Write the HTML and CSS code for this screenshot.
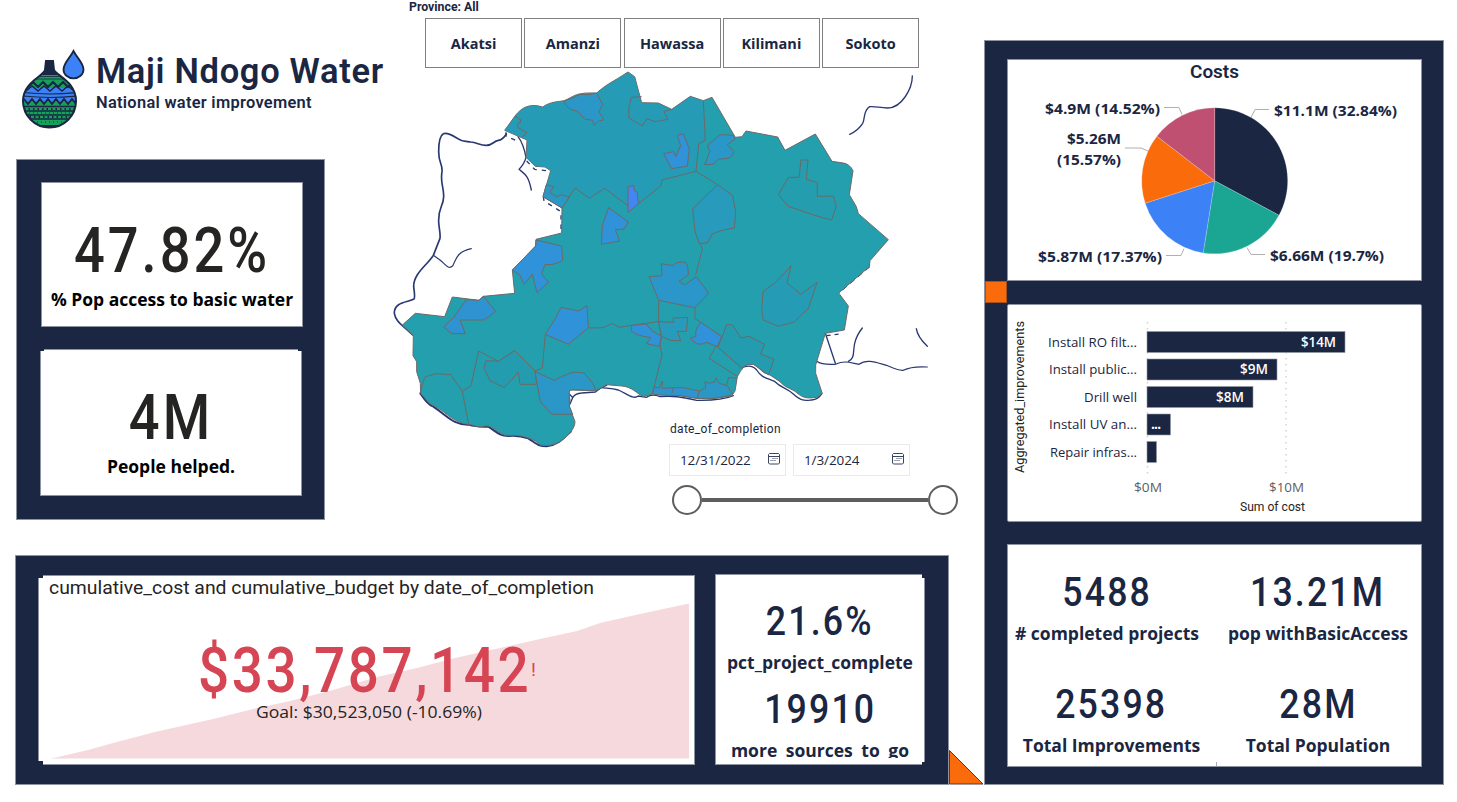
FILE: index.html
```html
<!DOCTYPE html>
<html lang="en">
<head>
<meta charset="utf-8">
<title>Maji Ndogo Water</title>
<link rel="stylesheet" href="styles.css">
</head>
<body>
<main class="page">
  <div class="left">
    <div class="upper">
      <div class="brand-col">
        <header class="brand">
          <svg class="logo" viewBox="0 0 66 82" width="66" height="82">
            <defs><clipPath id="pot"><path d="M26 12h7l1 9c3 6 22 12 22 31a26.500 26.500 0 0 1-53 0C3 33 24 27 25 21z"/></clipPath></defs>
            <g clip-path="url(#pot)">
              <rect width="66" height="82" fill="#1a2642"/>
              <rect y="25.500" width="66" height="14" fill="#16a05c"/>
              <rect y="39" width="66" height="13" fill="#3b82f6"/>
              <rect y="52" width="66" height="24" fill="#16a05c"/>
              <g fill="none" stroke="#1a2642">
                <path d="M0 27.500h60M0 30h60" stroke-width=".8"/>
                <path d="M8 38l5-5 5 5 5-5 5 5 5-5 5 5 5-5 5 5 5-5" stroke-width="2"/>
                <path d="M6 42l6-5 6 5 6-5 6 5 6-5 6 5 6-5 6 5" stroke-width="1.500"/>
                <path d="M3 43.500q27 3 54 0M3 47q27 3 54 0" stroke-width="1.200"/>
                <path d="M4 50l4 5 4-5 4 5 4-5 4 5 4-5 4 5 4-5 4 5 4-5 4 5 4-5 4 5" stroke-width="1.800"/>
                <path d="M2 57.500h56M3 62h54M5 66h50M8 70h44" stroke-width="1.300"/>
                <path d="M4 60h54M5 68h50" stroke-dasharray="1.500 3" stroke-width="2"/>
                <path d="M5 64h54M9 73h44" stroke-dasharray="1 3" stroke-width="1.200"/>
              </g>
            </g>
            <path d="M26 12h7l1 9c3 6 22 12 22 31a26.500 26.500 0 0 1-53 0C3 33 24 27 25 21z" fill="none" stroke="#1a2642" stroke-width="2"/>
            <path d="M26 12h7l1 9 5 5H20l5-5z" fill="#1a2642"/>
            <path d="M53.500 2C57 9 63.500 14 63.500 20.500a10 8.800 0 0 1-20 0C43.500 14 50 9 53.500 2z" fill="#3b82f6" stroke="#1a2642" stroke-width="1.800"/>
          </svg>
          <div class="brand-text">
            <h1 class="brand-name">Maji Ndogo Water</h1>
            <p class="brand-sub">National water improvement</p>
          </div>
        </header>
        <section class="panel kpi-panel">
          <div class="card kpi"><div class="num num-xl"><span>47.82%</span></div><div class="cap">% Pop access to basic water</div></div>
          <div class="card kpi kpi-low"><div class="num num-xl"><span>4M</span></div><div class="cap">People helped.</div></div>
        </section>
      </div>

      <div class="map-col">
        <div class="province">Province: All</div>
        <nav class="tabs">
          <button class="tab">Akatsi</button><button class="tab">Amanzi</button><button class="tab">Hawassa</button><button class="tab">Kilimani</button><button class="tab">Sokoto</button>
        </nav>
        <div class="map-area">
          <svg class="map" viewBox="1170 204 1782 1146" width="594" height="382">
            <g fill="none" stroke="#2a3872" stroke-width="5" stroke-linecap="round" stroke-linejoin="round">
              <g transform="translate(1140 180)">
                <path d="M379 222Q368 240 355 241C340 243 338 257 318 256C300 256 290 247 272 246C258 244 247 246 232 235C220 228 203 216 190 221C181 226 176 250 176 275C176 310 188 310 186 335C180 370 192 380 191 410C190 440 176 440 176 480C175 500 182 515 180 535L160 586C145 612 100 640 101 680C103 697 106 712 102 717C85 727 42 725 43 760C47 783 60 790 98 825"/>
                <path d="M160 586L180 600C195 612 205 630 218 618C228 600 228 576 274 566" stroke-width="3.500"/>
                <path d="M414 230Q430 250 438 292Q434 310 417 328C435 343 445 345 454 390" stroke-width="4"/>
                <path d="M378 217V228L412 243M440 303L464 328L506 333M490 410L492 423L543 455V515" stroke-dasharray="13 15" stroke-width="4" stroke-linecap="butt"/>
              </g>
              <g transform="translate(1920 180)">
                <path d="M817 48C817 85 785 145 742 144C720 144 705 138 689 140C669 152 676 175 668 190Q655 211 629 223" stroke-width="4"/>
              </g>
              <g transform="translate(1920 720)">
                <path d="M556 280L586 370M625 364C646 355 638 335 644 310Q650 285 667 264M829 266Q832 290 862 319" stroke-width="4"/>
                <path d="M530 364Q545 375 586 373C615 360 630 368 657 373C680 355 710 368 740 376C760 385 775 393 790 391Q815 378 862 381" stroke-width="3.500"/>
                <path d="M560 287L600 282" stroke-dasharray="12 12" stroke-linecap="butt" stroke-width="4"/>
                <path d="M690 80L596 160" stroke-dasharray="18 12" stroke-width="3" stroke-linecap="butt"/>
                <path d="M303 384C325 374 340 378 350 390C365 415 385 415 405 425C425 445 440 443 460 462C485 485 495 482 515 480Q535 478 546 460M280 467C255 478 220 482 170 481C120 470 100 467 60 470Q35 460 20 472L-5 468C-20 480-40 460-65 450C-90 442-110 447-130 440" stroke-width="4"/>
              </g>
              <g transform="translate(1140 720)">
                <path d="M121 460C135 480 145 495 160 500C205 530 220 555 266 554C290 562 310 560 325 560C350 575 355 587 385 588C410 585 430 590 445 595C475 615 475 619 500 619C535 615 550 595 572 575" stroke-width="6"/>
                <path d="M568 462L578 473Q585 460 605 459L646 456Q665 440 680 436M578 473L570 492" stroke-width="4"/>
              </g>
            </g>
            <path fill="#239fae" stroke="#6c6a68" stroke-width="3" stroke-linejoin="round" d="M1884 216L1904 230 1925 308 1975 309 2015 328 2071 289 2110 302 2136 292 2206 412 2226 410 2238 393 2333 411 2355 451 2446 402 2496 484 2530 489Q2549 492 2559 512L2548 584 2569 620 2575 641 2665 719 2610 782 2608 800 2516 879 2545 918 2533 990 2476 1000 2447 1095V1120L2466 1178Q2459 1193 2440 1193C2410 1197 2400 1186 2385 1174C2365 1162 2355 1162 2340 1145L2310 1125 2292 1118C2275 1105 2267 1090 2250 1092Q2231 1092 2212 1130L2205 1173 2195 1188 2140 1196H2095L2040 1187 1980 1185 1957 1182 1930 1190C1910 1180 1895 1160 1865 1158L1820 1154 1788 1172 1715 1170Q1704 1173 1707 1183L1710 1200 1708 1220 1725 1265Q1725 1283 1705 1304C1675 1334 1650 1340 1620 1335L1605 1322C1560 1302 1550 1307 1515 1306C1485 1295 1480 1275 1455 1278C1430 1285 1425 1275 1406 1273C1365 1270 1340 1240 1315 1225L1288 1210 1262 1180 1261 1150 1250 1115V1085L1239 1067 1240 1007 1207 975 1246 940 1334 950 1357 891 1437 901 1450 889 1544 880 1537 810 1607 738 1608 718 1685 699 1686 624 1629 590 1652 512 1635 501 1606 499 1578 472 1581 420 1514 391 1545 348C1565 322 1590 309 1628 321 1650 305 1675 305 1693 302 1725 288 1725 277 1790 279 1820 252 1835 248 1884 216Z"/>
            <path fill="#259bb5" d="M1884 218L1903 231 1924 310 1975 311 2015 330 2071 291 2109 303 2117 421 2096 432 2088 514 1986 540 1982 558 1884 636 1884 617 1814 565 1768 595 1725 564 1686 622 1631 590 1654 512 1635 500 1606 498 1580 472 1583 420 1516 391 1547 348C1565 325 1590 311 1628 323 1650 307 1675 307 1693 304 1725 290 1725 279 1790 281 1820 254 1835 250 1884 218Z"/>
            <g stroke="#6c6a68" stroke-width="3" stroke-linejoin="round" fill="none">
              <g transform="translate(1140 180)">
                <path fill="#2a97c8" d="M553 122Q575 117 600 103Q625 107 650 99L668 134 657 155 671 180 656 183 643 196 638 181 614 177 592 154 571 148 555 132Z"/>
                <path d="M785 110L754 112Q744 140 746 173L787 198 800 176 826 185 863 178 852 154 875 148M405 169L422 179 421 188 413 190 414 203 441 218 425 232M546 444L585 384 628 415 674 385 744 437"/>
                <path fill="#4285f4" d="M744 380L762 376 762 391 772 397 772 414 777 430 744 457Z"/>
                <path fill="#2a97c4" d="M489 410L499 374 521 380 509 397 530 411 544 404 568 411 546 444Z"/>
                <path fill="#3092d8" d="M686 443L745 486 732 507 706 509 719 543 664 553 667 496Z"/>
              </g>
              <g transform="translate(1920 180)">
                <path d="M190 122L196 240 176 252 168 334 66 360 62 378-3 430M168 334L233 374M180 550L187 566 178 602 167 645"/>
                <path fill="#3092d8" d="M112 226L130 221 148 267 142 318 95 326 71 281 101 275 108 289 122 257Z"/>
                <path fill="#2a97c8" d="M202 257L240 224 280 226 285 238 262 253 281 275Q279 292 262 295L235 298 219 313 194 314 210 274Z"/>
                <path fill="#289abb" d="M233 374L278 407 287 455 283 504Q235 511 216 523L203 548 178 551 165 515 158 446Z"/>
                <path d="M483 300H504L499 358 532 368V409L580 408 589 439 575 480 540 471 444 439 415 404 445 352H477Z" fill="#249daf"/>
              </g>
              <g transform="translate(1140 720)">
                <path fill="#3092d8" d="M468 0L545 18 548 61Q518 78 495 73L485 103 506 127 471 158 457 103 432 133 420 106 397 90 467 18Z"/>
                <path fill="#2e93d0" d="M259 179L297 181 310 169 347 214 313 240H240L256 281H216L191 261 221 232Z"/>
                <path fill="#3092d8" d="M543 202L596 213 621 197 625 263 565 313 496 283 528 232Z"/>
                <path d="M496 283L487 384 465 393 404 332 355 364 296 333 273 437 247 454 266 553M121 460Q129 420 136 410L170 401 212 404 247 454M625 264L669 263 698 250 717 262 755 256 841 244"/>
                <path fill="#249caf" d="M355 364L318 362 312 385 330 422 373 443 415 397 420 433H470L465 393 404 332Z"/>
                <path fill="#2a97c8" d="M465 395L523 421Q570 397 585 396L613 399 638 430 648 452 577 449Q564 452 568 466L568 498 578 523H515L481 485Z"/>
                <path fill="#3092d8" d="M755 256L800 252Q812 275 845 288L838 319 799 311 813 292Q775 290 754 273Z"/>
              </g>
              <g transform="translate(1920 720)">
                <path fill="#2b96ca" d="M64 71L100 77Q110 63 136 67 145 75 145 105L117 124 134 135 169 110 206 159 165 203 56 181 27 110 66 107Z"/>
                <path d="M56 181V245L64 290 60 317 66 345 37 462M165 203V236L245 290 207 355 292 409"/>
                <path fill="#289abb" d="M56 245L100 247V234L143 232 139 274H112L122 302 90 301 64 289Z"/>
                <path fill="#3092d8" d="M183 247L245 290 231 320 201 307Q170 323 151 294L168 290Q162 270 183 247Z"/>
                <path d="M234 322L305 384"/>
                <path fill="#249caf" d="M260 254H277L303 294 327 289 374 313 361 342 402 357 386 405Q350 380 340 373 320 370 305 384L234 322Z"/>
                <path fill="#259bb5" d="M453 77L441 128 482 163 531 127 505 206 462 246 415 259 370 240 365 210 369 154 406 128Z"/>
                <path fill="#2d94d0" d="M37 462L43 441 57 444 67 423 66 445 100 443H131L178 453 172 475 120 467 60 465Z"/>
                <path fill="#2a97c4" d="M178 453L197 443 195 424 206 430 225 425 228 413 238 430 252 434 262 437 268 448 278 460Q275 468 220 475H172Z"/>
                <path d="M291 415L266 412 260 434M100 443L96 460"/>
              </g>
            </g>
          </svg>
          <section class="slicer">
            <div class="slicer-label">date_of_completion</div>
            <div class="dates">
              <div class="date"><span>12/31/2022</span><svg viewBox="0 0 12 12" width="12" height="12"><path d="M1.500.5h9l1 1v8.500l-1 1h-9l-1-1V1.500zM.5 3.500h11M4.500 5.500h1M6.500 5.500h1M8.500 5.500h1M2.500 7.500h1M4.500 7.500h1M6.500 7.500h1" fill="none" stroke="#3a4560"/></svg></div>
              <div class="date"><span>1/3/2024</span><svg viewBox="0 0 12 12" width="12" height="12"><path d="M1.500.5h9l1 1v8.500l-1 1h-9l-1-1V1.500zM.5 3.500h11M4.500 5.500h1M6.500 5.500h1M8.500 5.500h1M2.500 7.500h1M4.500 7.500h1M6.500 7.500h1" fill="none" stroke="#3a4560"/></svg></div>
            </div>
            <div class="slider"><i class="knob"></i><i class="track"></i><i class="knob"></i></div>
          </section>
        </div>
      </div>
    </div>

    <div class="lower">
      <section class="panel cost-panel">
        <div class="card trend">
          <svg viewBox="38 575 657 190" width="657" height="190">
            <path d="M50 758.500L58 757 88 750 113 743 155 732 213 719 253 709 290 701 333 690 377 677 417 668 455 658 500 648 540 639 577 631 600 623 640 614 689 603.500V758.500Z" fill="#f6d9dd"/>
            <text x="49" y="594" class="t-title" textLength="545" lengthAdjust="spacingAndGlyphs">cumulative_cost and cumulative_budget by date_of_completion</text>
            <text transform="translate(198 692) scale(.87 1)" class="t-big" textLength="380">$33,787,142</text>
            <text x="531" y="676" class="t-bang">!</text>
            <text x="256" y="718" class="t-goal" textLength="226" lengthAdjust="spacingAndGlyphs">Goal: $30,523,050 (-10.69%)</text>
          </svg>
        </div>
        <div class="card progress">
          <div class="num num-md"><span>21.6%</span></div><div class="cap cap-navy">pct_project_complete</div>
          <div class="num num-md second"><span>19910</span></div><div class="cap cap-navy cap-cut">more sources to go</div>
        </div>
      </section>
      <svg class="corner" viewBox="0 0 35 35" width="35" height="35"><path d="M.5.500V34h33.500z" fill="#fa6c0b" stroke="#4f3b3c"/></svg>
    </div>
  </div>

  <aside class="panel side">
    <div class="card pie">
      <svg viewBox="1007 59 415 222" width="415" height="222">
        <text x="1190" y="78" class="t-costs" textLength="49" lengthAdjust="spacingAndGlyphs">Costs</text>
        <g transform="translate(1214.700 180.800)" stroke="#ffffff60" stroke-width=".5">
          <path d="M0 0V-73A73 73 0 0 1 64.300 34.500Z" fill="#1a2642"/>
          <path d="M0 0L64.300 34.500A73 73 0 0 1-11.500 72.100Z" fill="#1ba593"/>
          <path d="M0 0L-11.500 72.100A73 73 0 0 1-69.500 22.400Z" fill="#3c82f6"/>
          <path d="M0 0L-69.500 22.400A73 73 0 0 1-57.800-44.600Z" fill="#fa6c0b"/>
          <path d="M0 0L-57.800-44.600A73 73 0 0 1 0-73Z" fill="#bf5072"/>
        </g>
        <path d="M1164 107.500h15l3 7M1269 109.500h-14l-4 8M1125 148h16l7 3M1166 255.500h15l3-7M1265 254.500h-14l-4-7" fill="none" stroke="#b0b0b0"/>
        <g class="t-pie">
          <text x="1045" y="113.500" textLength="115" lengthAdjust="spacingAndGlyphs">$4.9M (14.52%)</text>
          <text x="1274" y="115.500" textLength="123" lengthAdjust="spacingAndGlyphs">$11.1M (32.84%)</text>
          <text x="1067" y="143.500" textLength="54" lengthAdjust="spacingAndGlyphs">$5.26M</text>
          <text x="1057" y="164.500" textLength="64" lengthAdjust="spacingAndGlyphs">(15.57%)</text>
          <text x="1038" y="261.500" textLength="124" lengthAdjust="spacingAndGlyphs">$5.87M (17.37%)</text>
          <text x="1270" y="260.500" textLength="114" lengthAdjust="spacingAndGlyphs">$6.66M (19.7%)</text>
        </g>
      </svg>
    </div>
    <div class="divider"></div>
    <div class="card bars">
      <svg viewBox="1007 304 415 218" width="415" height="218">
        <path d="M1147.500 322V475M1286 322V475" stroke="#d4d4d4" stroke-dasharray="1.500 4.500" stroke-width="1.500"/>
        <g fill="#1a2642" stroke="#9499a6" stroke-width=".6">
          <rect x="1147" y="331.500" width="198" height="21"/><rect x="1147" y="359" width="130" height="21"/>
          <rect x="1147" y="386.500" width="106" height="21"/><rect x="1147" y="414" width="23.500" height="21"/>
          <rect x="1147" y="441.500" width="9.500" height="21"/>
        </g>
        <g class="t-cat">
          <text x="1048" y="347" textLength="89" lengthAdjust="spacingAndGlyphs">Install RO filt...</text>
          <text x="1049" y="374" textLength="88" lengthAdjust="spacingAndGlyphs">Install public...</text>
          <text x="1084" y="402" textLength="53" lengthAdjust="spacingAndGlyphs">Drill well</text>
          <text x="1049" y="429" textLength="88" lengthAdjust="spacingAndGlyphs">Install UV an...</text>
          <text x="1050" y="457" textLength="87" lengthAdjust="spacingAndGlyphs">Repair infras...</text>
        </g>
        <g class="t-val">
          <text x="1301" y="347" textLength="35" lengthAdjust="spacingAndGlyphs">$14M</text>
          <text x="1240" y="374" textLength="28" lengthAdjust="spacingAndGlyphs">$9M</text>
          <text x="1216" y="402" textLength="28" lengthAdjust="spacingAndGlyphs">$8M</text>
          <text x="1151" y="429" class="t-dots" textLength="10">...</text>
        </g>
        <g class="t-axis">
          <text x="1134" y="492" textLength="28" lengthAdjust="spacingAndGlyphs">$0M</text>
          <text x="1269" y="492" textLength="35" lengthAdjust="spacingAndGlyphs">$10M</text>
        </g>
        <text x="1240" y="511" class="t-name" textLength="65" lengthAdjust="spacingAndGlyphs">Sum of cost</text>
        <text transform="translate(1024 473) rotate(-90)" class="t-name" textLength="152" lengthAdjust="spacingAndGlyphs">Aggregated_improvements</text>
      </svg>
    </div>
    <div class="card stats">
      <div class="stat stat-a"><div class="num num-md"><span>5488</span></div><div class="cap cap-navy"># completed projects</div></div>
      <div class="stat"><div class="num num-md"><span>13.21M</span></div><div class="cap cap-navy">pop withBasicAccess</div></div>
      <div class="stat"><div class="num num-md"><span>25398</span></div><div class="cap cap-navy">Total Improvements</div></div>
      <div class="stat"><div class="num num-md"><span>28M</span></div><div class="cap cap-navy">Total Population</div></div>
    </div>
  </aside>
</main>
</body>
</html>
```
FILE: styles.css
```css
* { box-sizing: border-box; margin: 0; padding: 0; }
body { background: #fff; font-family: "Open Sans", "Noto Sans", sans-serif; color: #1a2642; overflow: hidden; }
svg { display: block; }
.page { display: flex; width: 1457px; height: 802px; }
.left { width: 984px; display: flex; flex-direction: column; }
.upper { display: flex; height: 555px; }
.brand-col { width: 390px; }
.brand { display: flex; height: 159px; padding: 49px 0 0 20px; gap: 10px; }
.brand-text { padding-top: 3px; white-space: nowrap; }
.brand-name { font: 600 35px/39px Roboto, sans-serif; letter-spacing: .7px; transform: scaleX(.985); transform-origin: left; }
.brand-sub { font: 600 17px/21px Roboto, sans-serif; margin-top: 1px; letter-spacing: .3px; transform: scaleX(.965); transform-origin: left; }
.panel { background: #1a2642; border: 1px solid #8d93a1; }
.card { position: relative; background: #fff; border: 1px solid #8d93a1; }
.card > svg { margin: -1px; }
.kpi-panel { width: 309px; height: 361px; margin-left: 16px; padding: 22px 0 0 24px; display: flex; flex-direction: column; gap: 22px; }
.kpi { width: 262px; height: 145px; padding-top: 38px; display: flex; flex-direction: column; gap: 6px; text-align: center; }
.kpi-low { margin-left: -1px; height: 147px; }
.kpi-low::before, .trend::before { content: ""; position: absolute; left: -1px; top: -1px; width: 4px; height: 2px; background: #1a2642; }
.kpi-low::after { content: ""; position: absolute; right: -1px; top: -1px; width: 4px; height: 2px; background: #1a2642; }
.trend::before { width: 5px; height: 3px; }
.trend::after { content: ""; position: absolute; left: -1px; bottom: -1px; width: 5px; height: 4px; background: #1a2642; }
.progress::before { content: ""; position: absolute; right: -1px; top: -1px; width: 3px; height: 4px; background: #1a2642; }
.progress::after { content: ""; position: absolute; right: -1px; bottom: -1px; width: 3px; height: 3px; background: #1a2642; }
.stats::after { content: ""; position: absolute; left: 208px; bottom: 0; width: 1px; height: 4px; background: #a9adb7; }
.num { font-family: Roboto, sans-serif; font-weight: 500; white-space: nowrap; display: flex; justify-content: center; }
.num span { transform: scaleX(.86); }
.num-xl { font-size: 63px; line-height: 60px; letter-spacing: 3.500px; color: #252423; }
.num-md { font-size: 41.500px; line-height: 40px; letter-spacing: 2.500px; }
.cap { font-size: 17.500px; font-weight: 700; line-height: 24px; color: #000; white-space: nowrap; display: flex; justify-content: center; }
.cap-navy { color: #1a2642; }

.map-col { width: 594px; display: flex; flex-direction: column; }
.province { height: 18px; padding-left: 19px; font: 700 12.300px/14px Roboto, sans-serif; }
.tabs { display: flex; gap: 2.300px; height: 50px; padding-left: 35px; }
.tab { width: 97px; height: 50px; background: #fff; border: 1px solid #808080; font: 700 14.500px "Open Sans", sans-serif; color: #1a2642; }
.map-area { display: grid; height: 487px; }
.map { grid-area: 1 / 1; }
.slicer { grid-area: 1 / 1; padding: 352px 0 0 279px; }
.slicer-label { font: 400 12px/18px Roboto, sans-serif; letter-spacing: .3px; height: 24px; padding-left: 1px; }
.dates { display: flex; gap: 7px; }
.date { width: 117px; height: 32px; border: 1px solid #eaeaea; padding: 0 5px 0 10px; display: flex; align-items: center; justify-content: space-between; font-size: 13.500px; letter-spacing: -.1px; }
.date svg { margin-bottom: 2px; }
.slider { display: flex; align-items: center; width: 286px; height: 30px; margin: 9px 0 0 3px; }
.knob { width: 30px; height: 30px; border: 2px solid #605e5c; border-radius: 50%; }
.track { flex: 1; height: 4px; background: #605e5c; }

.lower { display: flex; align-items: flex-end; height: 230px; padding-left: 15px; }
.cost-panel { width: 934px; height: 230px; padding: 19px 0 0 22px; display: flex; gap: 20px; }
.trend { width: 657px; height: 190px; }
.progress { width: 210px; height: 191px; margin-top: -1px; padding-top: 26px; }
.progress .cap { margin-top: 9px; }
.second { margin-top: 15px; }
.cap-cut { height: 20px; overflow: hidden; word-spacing: 4px; }
.corner { flex: none; }

.side { width: 460px; height: 745px; margin-top: 40px; padding: 18px 0 0 22px; }
.side .card { width: 415px; }
.pie { height: 222px; }
.divider { width: 22px; height: 22px; margin-left: -22px; background: #fa6c0b; border: 1px solid #a6521d; }
.bars { height: 218px; margin-top: 1px; border-radius: 2px; }
.stats { height: 223px; margin-top: 22px; display: grid; grid-template-columns: 207px 206px; grid-template-rows: 112px 100px; padding-top: 27px; }
.stat .cap { margin-top: 9px; }
.stat-a { margin-left: -9px; }

.t-title { font: 19px Roboto, sans-serif; fill: #252423; }
.t-big { font: 500 63px Roboto, sans-serif; fill: #d64554; }
.t-bang { font: 19px Roboto, sans-serif; fill: #d64554; }
.t-goal { font: 16.500px "Open Sans", sans-serif; fill: #252423; }
.t-costs { font: 600 19px Roboto, sans-serif; fill: #1a2642; }
.t-pie { font: 700 14px "Open Sans", sans-serif; fill: #1a2642; }
.t-cat { font: 13.500px "Open Sans", sans-serif; fill: #1a2642; }
.t-val { font: 600 13.500px "Open Sans", sans-serif; fill: #fff; }
.t-dots { font-weight: 700; }
.t-axis { font: 13.500px "Open Sans", sans-serif; fill: #605e5c; }
.t-name { font: 12px Roboto, sans-serif; fill: #252423; }
```
